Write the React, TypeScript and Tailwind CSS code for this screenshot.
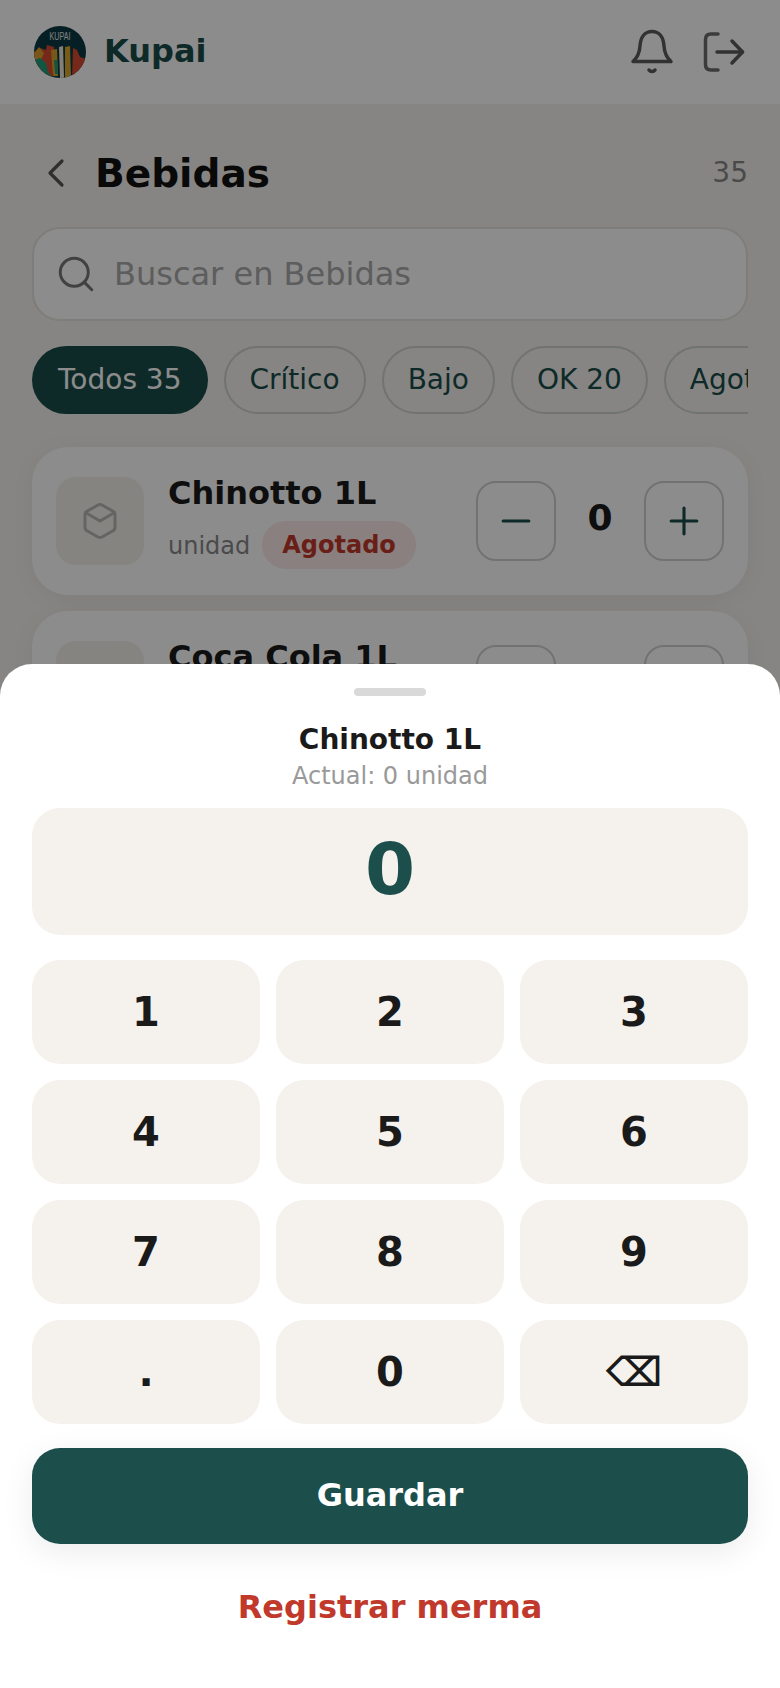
import React from "react";
import { ChevronLeft, Search, Minus, Plus } from "lucide-react";

const font = { fontFamily: '"DejaVu Sans", sans-serif' };

function Logo() {
  return (
    <svg width="52" height="52" viewBox="0 0 52 52" className="shrink-0">
      <defs>
        <clipPath id="logo-c"><circle cx="26" cy="26" r="26" /></clipPath>
      </defs>
      <g clipPath="url(#logo-c)">
        <rect width="52" height="52" fill="#0a3a42" />
        <path d="M0 26 L6 22 L12 24 L13 19 L20 21 L21 40 L18 52 L0 52Z" fill="#d84a30" />
        <path d="M0 27 L5 21 L10 27 L7 34 L0 33Z" fill="#d9a02c" />
        <path d="M0 34 L6 32 L12 37 L14 46 L19 52 L0 52Z" fill="#1f9c78" />
        <path d="M17 24 L23 23 L24 50 L19 50Z" fill="#d7a22c" />
        <path d="M20 34 L23 34 L24 48 L21 48Z" fill="#1f9c78" />
        <path d="M25 21 L29 20 L30 52 L26 52Z" fill="#efe8dc" />
        <path d="M31 21 L36 20 L37 52 L31 52Z" fill="#dca72f" />
        <path d="M39 22 L43 24 L46 31 L52 33 L52 52 L38 52Z" fill="#d84a30" />
      </g>
      <text x="26" y="14" textAnchor="middle" fontSize="10" textLength="21" lengthAdjust="spacingAndGlyphs" fill="#e8e8e8" fontFamily="Liberation Sans, sans-serif">KUPAI</text>
    </svg>
  );
}

function BellIcon() {
  return (
    <svg width="44" height="46" viewBox="0 0 44 46" fill="none" stroke="#5c5c5c" strokeWidth="3.5" strokeLinecap="round" strokeLinejoin="round">
      <path d="M3 32.5 C7 29 9.5 25 10 17 C10.5 8 15 2.5 22 2.5 C29 2.5 33.5 8 34 17 C34.5 25 37 29 41 32.5 Z" />
      <path d="M19 41 C20.5 43 23.5 43 25 41" />
    </svg>
  );
}

function ExitIcon() {
  return (
    <svg width="42" height="42" viewBox="0 0 42 42" fill="none" strokeWidth="3.5" strokeLinecap="round" strokeLinejoin="round">
      <path d="M15 3 H8 Q2.5 3 2.5 8.5 V33.5 Q2.5 39 8 39 H15" stroke="#6c6c6c" />
      <path d="M14 21 H39.5" stroke="#5c5c5c" />
      <path d="M29 10 L39.5 21 L29 32" stroke="#5c5c5c" />
    </svg>
  );
}

function BoxIcon() {
  return (
    <svg width="36" height="38" viewBox="0 0 36 38" fill="none" stroke="#b8b6b2" strokeWidth="3" strokeLinecap="round" strokeLinejoin="round">
      <path d="M16 3 Q18 2 20 3 L31.5 9.5 Q33 10.5 33 12.5 V25.5 Q33 27.5 31.5 28.5 L20 35 Q18 36 16 35 L4.5 28.5 Q3 27.5 3 25.5 V12.5 Q3 10.5 4.5 9.5 Z" />
      <path d="M3.5 10.5 L18 19 L32.5 10.5" />
    </svg>
  );
}

function Chip({ label, active }: { label: string; active?: boolean }) {
  return (
    <div
      className={
        active
          ? "shrink-0 h-[68px] px-[26px] flex items-center rounded-full bg-[#1a4d4a] text-white text-[28px]"
          : "shrink-0 h-[68px] px-[24px] flex items-center rounded-full border-2 border-[#ccd2ce] text-[#1a4d4a] text-[28px]"
      }
    >
      {label}
    </div>
  );
}

function Card({ name, badge }: { name: string; badge: string }) {
  return (
    <div className="h-[148px] shrink-0 rounded-[36px] bg-white shadow-[0_4px_24px_rgba(0,0,0,0.05)] px-6 flex items-center">
      <div className="w-[88px] h-[88px] rounded-[20px] bg-[#f4f1ec] flex items-center justify-center">
        <BoxIcon />
      </div>
      <div className="ml-6 flex-1 min-w-0">
        <div className="text-[32px] leading-[40px] font-bold text-[#1a1a1a]">{name}</div>
        <div className="mt-[8px] flex items-center gap-3">
          <span className="mt-[2px] text-[24px] text-[#888]">unidad</span>
          <span className="h-[48px] px-5 flex items-center rounded-full bg-[#fbe9e7] text-[#c0392b] font-bold text-[24px]">{badge}</span>
        </div>
      </div>
      <div className="flex items-center">
        <div className="w-[80px] h-[80px] rounded-[20px] border-2 border-[#ccd2ce] flex items-center justify-center text-[#1a4d4a]">
          <Minus size={44} strokeWidth={1.7} />
        </div>
        <div className="w-[88px] text-center text-[36px] font-bold text-[#1a1a1a] -mt-[6px]">0</div>
        <div className="w-[80px] h-[80px] rounded-[20px] border-2 border-[#ccd2ce] flex items-center justify-center text-[#1a4d4a]">
          <Plus size={44} strokeWidth={1.7} />
        </div>
      </div>
    </div>
  );
}

function Key({ label }: { label: string }) {
  return (
    <div className="h-[104px] rounded-[28px] bg-[#f5f2ee] flex items-center justify-center text-[40px] font-bold text-[#1a1a1a]">
      {label}
    </div>
  );
}

export default function App() {
  const keys = ["1", "2", "3", "4", "5", "6", "7", "8", "9", ".", "0", "⌫"];
  return (
    <div className="relative w-[780px] h-[1688px] overflow-hidden bg-[#f5f2ee]" style={font}>
      <header className="h-[104px] bg-white pl-[34px] pr-[35px] flex items-center justify-between">
        <div className="flex items-center gap-[18px]">
          <Logo />
          <span className="text-[32px] font-bold text-[#1a4d4a] -mt-[2px]">Kupai</span>
        </div>
        <div className="flex items-center gap-[29px]">
          <BellIcon />
          <ExitIcon />
        </div>
      </header>
      <main className="px-8 flex flex-col">
        <div className="h-[123px] pt-[15px] flex items-center justify-between">
          <div className="flex items-center">
            <ChevronLeft size={48} strokeWidth={1.6} className="text-[#555]" />
            <span className="ml-[15px] mt-[2px] text-[39px] font-bold text-[#111]">Bebidas</span>
          </div>
          <span className="text-[28px] text-[#888]">35</span>
        </div>
        <div className="h-[94px] rounded-[28px] bg-white border-2 border-[#e6e3de] flex items-center pl-[21px] gap-[17px]">
          <Search size={42} strokeWidth={1.7} className="text-[#777]" />
          <span className="text-[32px] text-[#aaa]">Buscar en Bebidas</span>
        </div>
        <div className="mt-[25px] flex gap-4 overflow-hidden">
          <Chip label="Todos 35" active />
          <Chip label="Crítico" />
          <Chip label="Bajo" />
          <Chip label="OK 20" />
          <Chip label="Agotado 15" />
        </div>
        <div className="mt-[33px] flex flex-col gap-4">
          <Card name="Chinotto 1L" badge="Agotado" />
          <Card name="Coca Cola 1L" badge="Agotado" />
        </div>
      </main>

      <div className="absolute inset-0 bg-black/45 backdrop-blur-[0.5px]" />

      <div className="absolute left-0 right-0 bottom-0 h-[1024px] bg-white rounded-t-[32px] px-8 flex flex-col">
        <div className="mt-6 mx-auto w-[72px] h-2 rounded-full bg-[#d9d9d9]" />
        <div className="mt-[25px] text-center text-[28px] leading-[38px] font-bold text-[#1a1a1a]">Chinotto 1L</div>
        <div className="text-center text-[24px] leading-[34px] text-[#999]">Actual: 0 unidad</div>
        <div className="mt-[15px] h-[127px] pb-[6px] rounded-[28px] bg-[#f5f2ee] flex items-center justify-center text-[72px] font-bold text-[#1c4f4c]">0</div>
        <div className="mt-[25px] grid grid-cols-3 gap-4">
          {keys.map((k) => (
            <Key key={k} label={k} />
          ))}
        </div>
        <div className="mt-6 h-[96px] pb-[2px] rounded-[28px] bg-[#1c4f4c] shadow-[0_8px_32px_rgba(0,0,0,0.08)] flex items-center justify-center text-white text-[32px] font-bold">Guardar</div>
        <div className="mt-[31px] text-center text-[32px] leading-[64px] font-bold text-[#c0392b]">Registrar merma</div>
      </div>
    </div>
  );
}
